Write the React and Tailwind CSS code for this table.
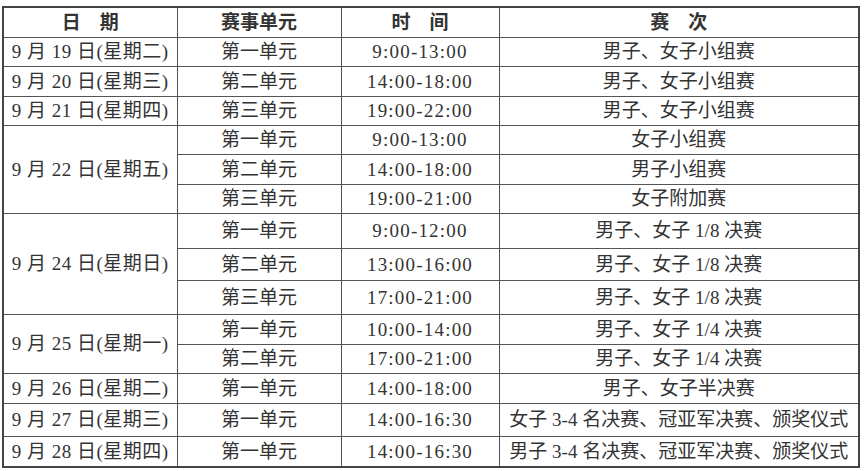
import React from "react";

// Schedule rows: date groups, each with its sessions
const GROUPS = [
  { date: "9 月 19 日(星期二)", rows: [["第一单元", "9:00-13:00", "男子、女子小组赛", 29]] },
  { date: "9 月 20 日(星期三)", rows: [["第二单元", "14:00-18:00", "男子、女子小组赛", 30]] },
  { date: "9 月 21 日(星期四)", rows: [["第三单元", "19:00-22:00", "男子、女子小组赛", 29]] },
  {
    date: "9 月 22 日(星期五)",
    rows: [
      ["第一单元", "9:00-13:00", "女子小组赛", 29],
      ["第二单元", "14:00-18:00", "男子小组赛", 30],
      ["第三单元", "19:00-21:00", "女子附加赛", 29],
    ],
  },
  {
    date: "9 月 24 日(星期日)",
    rows: [
      ["第一单元", "9:00-12:00", "男子、女子 1/8 决赛", 35],
      ["第二单元", "13:00-16:00", "男子、女子 1/8 决赛", 32],
      ["第三单元", "17:00-21:00", "男子、女子 1/8 决赛", 34],
    ],
  },
  {
    date: "9 月 25 日(星期一)",
    rows: [
      ["第一单元", "10:00-14:00", "男子、女子 1/4 决赛", 30],
      ["第二单元", "17:00-21:00", "男子、女子 1/4 决赛", 29],
    ],
  },
  { date: "9 月 26 日(星期二)", rows: [["第一单元", "14:00-18:00", "男子、女子半决赛", 30]] },
  { date: "9 月 27 日(星期三)", rows: [["第一单元", "14:00-16:30", "女子 3-4 名决赛、冠亚军决赛、颁奖仪式", 33]] },
  { date: "9 月 28 日(星期四)", rows: [["第一单元", "14:00-16:30", "男子 3-4 名决赛、冠亚军决赛、颁奖仪式", 31]] },
];

const cell = "border border-[#555] text-center align-middle p-0 leading-none";

export default function App() {
  return (
    <div className="w-[864px] h-[471px] bg-white pt-[6px] pl-[2px]">
      <table
        className="border-collapse border-2 border-[#444] text-[#333] text-[19px] w-[858px] table-fixed"
        style={{ fontFamily: '"Liberation Serif", "Noto Sans CJK SC", serif' }}
      >
        <colgroup>
          <col className="w-[174px]" />
          <col className="w-[164px]" />
          <col className="w-[158px]" />
          <col />
        </colgroup>
        <thead>
          <tr className="h-[30px] font-bold">
            <th className={cell}>日　期</th>
            <th className={cell}>赛事单元</th>
            <th className={cell}>时　间</th>
            <th className={cell}>赛　次</th>
          </tr>
        </thead>
        <tbody>
          {GROUPS.map((g) =>
            g.rows.map(([unit, time, event, h], i) => (
              <tr key={g.date + i} style={{ height: h }}>
                {i === 0 && (
                  <td rowSpan={g.rows.length} className={`${cell} whitespace-nowrap tracking-[0.5px]`}>
                    {g.date}
                  </td>
                )}
                <td className={cell}>{unit}</td>
                <td className={`${cell} tracking-[1.2px]`}>{time}</td>
                <td className={`${cell} whitespace-nowrap`}>{event}</td>
              </tr>
            ))
          )}
        </tbody>
      </table>
    </div>
  );
}
